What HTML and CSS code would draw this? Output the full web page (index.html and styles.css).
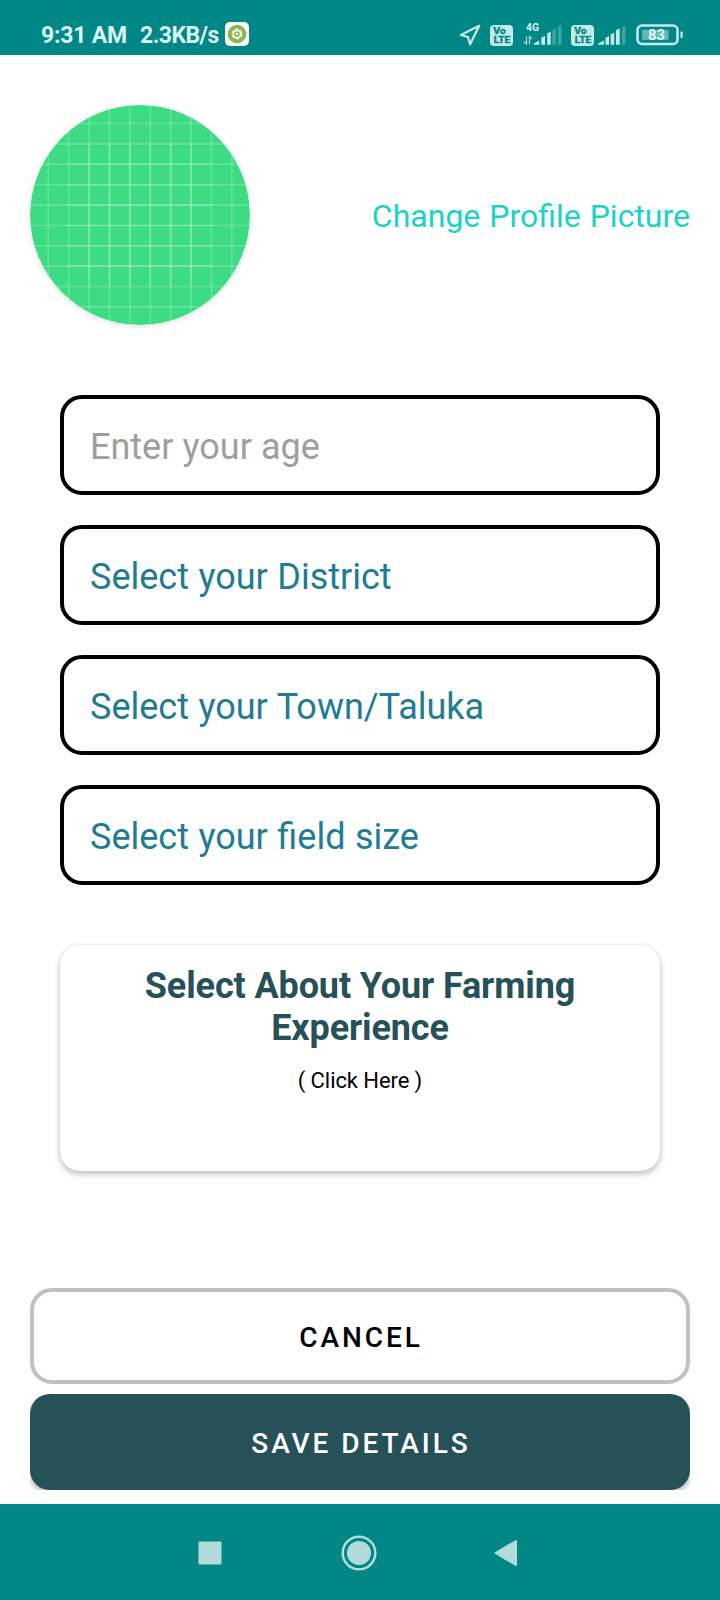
FILE: index.html
```html
<!DOCTYPE html>
<html lang="en">
<head>
<meta charset="utf-8">
<title>Profile details</title>
<link rel="stylesheet" href="styles.css">
</head>
<body>
<div class="screen">
  <header class="status">
    <span class="clock">9:31 AM</span>
    <span class="speed">2.3KB/s</span>
    <svg class="app-icon" width="24" height="24" viewBox="0 0 24 24">
      <rect width="24" height="24" rx="5" fill="#fff"/>
      <circle cx="12" cy="12" r="9.3" fill="#8bb84a"/>
      <circle cx="12" cy="12" r="4.6" fill="none" stroke="#fff" stroke-width="1.6" stroke-dasharray="3.2 1.62"/>
      <circle cx="12" cy="12" r="3.6" fill="none" stroke="#fff" stroke-width="1.5"/>
      <rect x="11" y="11" width="2" height="2" fill="#fff"/>
    </svg>
    <svg class="location" width="22" height="22" viewBox="0 0 22 22">
      <path d="M20.2 1.8 1.8 11l7.2 2 2.1 7.2z" fill="none" stroke="#c4eae8" stroke-width="2.3" stroke-linejoin="round"/>
    </svg>
    <svg class="volte" width="23" height="21" viewBox="0 0 23 21">
      <rect width="23" height="21" rx="4" fill="#c4eae8"/>
      <text class="volte-text" x="3.2" y="9.2" textLength="12.5" lengthAdjust="spacingAndGlyphs">Vo</text>
      <text class="volte-text" x="3.8" y="18.2" textLength="16.4" lengthAdjust="spacingAndGlyphs">LTE</text>
    </svg>
    <svg class="signal-data" width="39" height="24" viewBox="0 0 39 24">
      <text class="net-text" x="3" y="8.8" textLength="13" lengthAdjust="spacingAndGlyphs">4G</text>
      <path d="M3.5 14.5v7.5L1 19.5M6.5 22v-7.5L9 17" fill="none" stroke="#a6dad8" stroke-width="1.3"/>
      <g fill="#c4eae8">
        <path d="M10.8 22.8v-1.3l5.5-3v4.3zM18.3 22.8v-7l3.7-2v9zM24.2 22.8V11.5l3.5-2v13.3z"/>
        <path opacity=".3" d="M29.3 22.8V8.2l3.5-2v16.6zM35 22.8V4.8l3.5-2.2v20.2z"/>
      </g>
    </svg>
    <svg class="volte second" width="23" height="21" viewBox="0 0 23 21">
      <rect width="23" height="21" rx="4" fill="#c4eae8"/>
      <text class="volte-text" x="3.2" y="9.2" textLength="12.5" lengthAdjust="spacingAndGlyphs">Vo</text>
      <text class="volte-text" x="3.8" y="18.2" textLength="16.4" lengthAdjust="spacingAndGlyphs">LTE</text>
    </svg>
    <svg class="signal" width="28" height="21" viewBox="0 0 28 21">
      <g fill="#c4eae8">
        <path d="M0 19.8v-1.3l6-3v4.3zM7.5 19.8v-7l3.5-1.8v8.8zM12.7 19.8V9.5l3.5-1.8v12.1zM18 19.8V5.2l3.7-2v16.6z"/>
        <path opacity=".3" d="M24 19.8V2.2L27.5 0v19.8z"/>
      </g>
    </svg>
    <svg class="battery" width="48" height="22" viewBox="0 0 48 22">
      <rect x="1.5" y="1.5" width="40" height="18.5" rx="4.5" fill="none" stroke="#c4eae8" stroke-width="2.6"/>
      <rect x="6" y="5.8" width="26.5" height="10" fill="#62b8b5"/>
      <path d="M44.5 7.5h1.2a1 1 0 0 1 1 1v4.5a1 1 0 0 1-1 1h-1.2z" fill="#c4eae8"/>
      <text class="battery-text" x="12" y="16" textLength="17" lengthAdjust="spacingAndGlyphs">83</text>
    </svg>
  </header>

  <main class="content">
    <section class="profile">
      <svg class="avatar" width="220" height="220" viewBox="0 0 220 220">
        <defs>
          <clipPath id="round"><circle cx="110" cy="110" r="110"/></clipPath>
        </defs>
        <g clip-path="url(#round)">
          <rect width="220" height="220" fill="#3ddc84"/>
          <g fill="none" stroke="#fff" stroke-opacity=".2" stroke-width="1.6">
            <path d="M18.3 0v220M38.7 0v220M59.1 0v220M79.5 0v220M99.9 0v220M120.3 0v220M140.7 0v220M161.1 0v220M181.5 0v220M201.9 0v220"/>
            <path d="M0 18.5h220M0 38.9h220M0 59.3h220M0 79.7h220M0 100.1h220M0 120.5h220M0 140.7h220M0 161.1h220M0 181.5h220M0 201.9h220"/>
            <path d="M59.1 39v142M79.5 39v142M99.9 39v142M120.3 39v142M140.7 39v142M161.1 39v142"/>
            <path d="M39 59.3h142M39 79.7h142M39 100.1h142M39 120.5h142M39 140.7h142M39 161.1h142"/>
          </g>
        </g>
      </svg>
      <a class="change">Change Profile Picture</a>
    </section>

    <section class="fields">
      <div class="field hint"><span>Enter your age</span></div>
      <div class="field"><span>Select your District</span></div>
      <div class="field"><span>Select your Town/Taluka</span></div>
      <div class="field"><span>Select your field size</span></div>
    </section>

    <section class="card">
      <h1 class="card-title">Select About Your Farming Experience</h1>
      <p class="card-sub">( Click Here )</p>
    </section>

    <section class="actions">
      <button class="btn cancel">CANCEL</button>
      <div class="save-wrap"><button class="btn save">SAVE DETAILS</button></div>
    </section>
  </main>

  <nav class="navbar">
    <svg class="recents" width="24" height="24" viewBox="0 0 24 24"><rect x=".5" y=".5" width="23" height="23" rx="1" fill="#b2dbdb"/></svg>
    <svg class="home" width="36" height="36" viewBox="0 0 36 36"><circle cx="18" cy="18" r="16.3" fill="none" stroke="#b2dbdb" stroke-width="2.5"/><circle cx="18" cy="18" r="12" fill="#b2dbdb"/></svg>
    <svg class="back" width="24" height="28" viewBox="0 0 24 28"><path d="M1.5 14 22 2v24z" fill="#b2dbdb" stroke="#b2dbdb" stroke-width="2" stroke-linejoin="round"/></svg>
  </nav>
</div>
</body>
</html>
```

FILE: styles.css
```css
* { box-sizing: border-box; }

body {
  margin: 0;
  background: #fefefe;
  font-family: Roboto, "Liberation Sans", sans-serif;
}

.screen {
  width: 720px;
  height: 1600px;
  display: flex;
  flex-direction: column;
}

/* Status bar */
.status {
  height: 55px;
  flex: none;
  padding: 15px 0 0 41px;
  display: flex;
  align-items: center;
  background: #018786;
  color: #d9f5f3;
  font-size: 23px;
  font-weight: 700;
  line-height: 40px;
  white-space: nowrap;
}

.clock { width: 99px; padding-top: 2px; letter-spacing: -.2px; }
.speed { width: 85px; padding-top: 2px; letter-spacing: -.55px; }
.app-icon { margin-top: -2px; }
.location { margin-left: 210px; }
.volte { margin-left: 9px; }
.signal-data { margin: -3px 0 0 10px; }
.volte.second { margin-left: 9px; }
.signal { margin-left: 4px; }
.battery { margin-left: 10px; }
.volte-text { font: 700 8.6px Roboto, sans-serif; fill: #018786; stroke: #018786; stroke-width: .4px; }
.net-text { font: 700 10px Roboto, sans-serif; fill: #d9f5f3; }
.battery-text { font: 700 15px Roboto, sans-serif; fill: #e2f6f5; }

/* Content */
.content {
  flex: 1;
  display: flex;
  flex-direction: column;
  padding: 50px 30px 0;
}

.profile {
  display: flex;
  align-items: center;
  justify-content: space-between;
}

.avatar {
  display: block;
  border-radius: 50%;
  box-shadow: 0 1px 5px rgba(0, 0, 0, .14);
}

.change {
  padding-top: 2px;
  color: #1bd3c3;
  font-size: 32px;
  line-height: 38px;
  word-spacing: 1px;
  white-space: nowrap;
}

.fields {
  display: flex;
  flex-direction: column;
  gap: 30px;
  margin: 70px 30px 0;
}

.field {
  height: 100px;
  padding: 4px 26px 0;
  display: flex;
  align-items: center;
  border: 4px solid #000;
  border-radius: 22px;
  color: #217b92;
  font-size: 36px;
  line-height: 42px;
  word-spacing: .6px;
  white-space: nowrap;
}

.field.hint {
  color: #9e9e9e;
  word-spacing: .2px;
}

.card {
  height: 226px;
  margin: 60px 30px 0;
  padding: 20px 60px 0;
  border-radius: 20px;
  background: #fff;
  box-shadow: 0 3px 6px rgba(0, 0, 0, .25), 0 0 2px rgba(0, 0, 0, .1);
  text-align: center;
}

.card-title {
  margin: 0;
  color: #265159;
  font-size: 36px;
  font-weight: 700;
  line-height: 42px;
  letter-spacing: -.12px;
}

.card-sub {
  margin: 19px 0 0;
  color: #000;
  font-size: 22px;
  line-height: 26px;
  letter-spacing: -.08px;
}

.actions {
  display: flex;
  flex-direction: column;
  gap: 10px;
  margin-top: 117px;
}

.btn {
  display: block;
  width: 100%;
  height: 96px;
  padding: 2px 0 0 2px;
  border: 0;
  border-radius: 20px;
  font-family: inherit;
  font-size: 28px;
  font-weight: 500;
  letter-spacing: 2.95px;
}

.cancel {
  border: 4px solid #c1c1c1;
  border-radius: 22px;
  background: #fefefe;
  color: #000;
}

/* The button's shadow is visible only within its own bounds. */
.save-wrap { overflow: hidden; }

.save {
  background: #265159;
  color: #fff;
  box-shadow: 0 3px 6px rgba(0, 0, 0, .3);
}

/* System navigation */
.navbar {
  height: 96px;
  flex: none;
  display: flex;
  align-items: center;
  padding: 1px 0 0 198px;
  background: #018786;
}

.home { margin-left: 119px; }
.back { margin-left: 117px; }
```
